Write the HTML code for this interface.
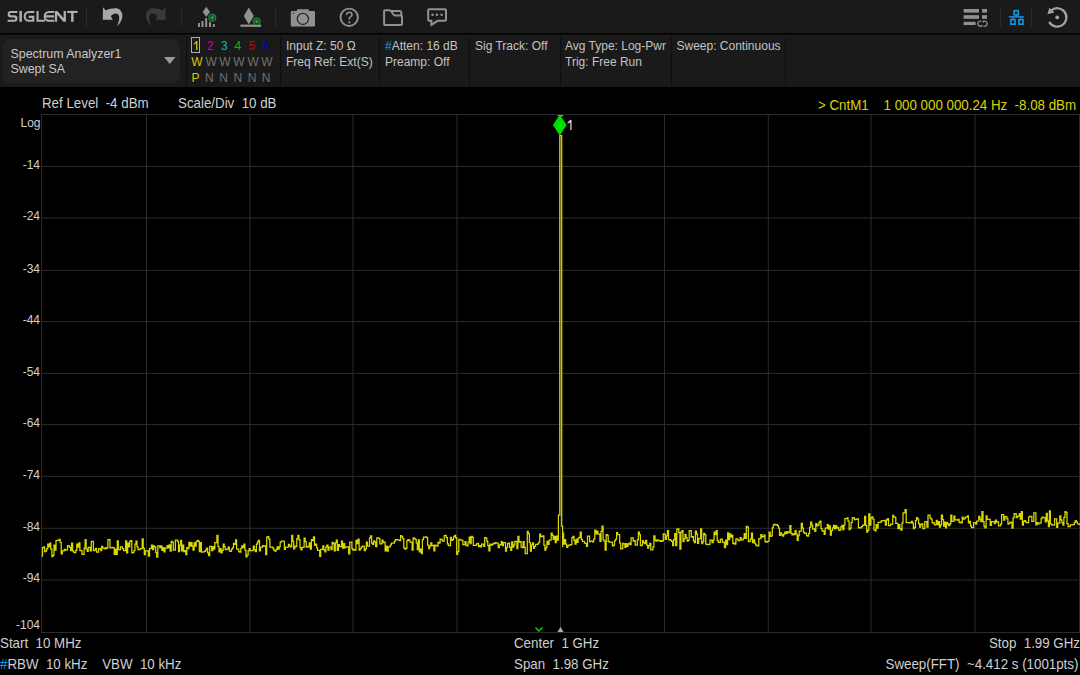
<!DOCTYPE html>
<html><head><meta charset="utf-8">
<style>
html,body{margin:0;padding:0;}
body{width:1080px;height:675px;overflow:hidden;background:#000;position:relative;font-family:"Liberation Sans",sans-serif;}
.abs{position:absolute;white-space:pre;line-height:1;}
#tb{position:absolute;left:0;top:0;width:1080px;height:33px;background:#1a1a1a;}
#tbline{position:absolute;left:0;top:33px;width:1080px;height:1px;background:#000;}
#pn{position:absolute;left:0;top:34px;width:1080px;height:53px;background:#1a1a1a;}
.sep{position:absolute;width:1px;background:#0e0e0e;top:3px;height:48px;}
.tsep{position:absolute;width:1px;background:#2a2a2a;top:7px;height:20px;}
.pt{position:absolute;white-space:pre;line-height:1;font-size:12px;color:#c4c4c4;}
.ct{position:absolute;white-space:pre;line-height:1;font-size:14.2px;color:#cfcfcf;transform:scaleX(0.939);transform-origin:0 0;}
.yl{position:absolute;white-space:pre;line-height:1;font-size:12px;color:#d0d0d0;right:1040px;}
svg{position:absolute;left:0;top:0;}
</style></head><body>
<div id="tb">
  <svg width="1080" height="33" viewBox="0 0 1080 33">
    <g fill="none" stroke="#adb0ad" stroke-width="2.1">
      <path d="M17.4,11.95 H10.9 A2.2,2.2 0 0 0 10.9,16.35 H14.2 A2.22,2.22 0 0 1 14.2,20.8 H7.6"/>
      <path d="M20.65,10.9 V21.85" stroke-width="2.5"/>
      <path d="M34.3,11.95 H28.9 A4.43,4.43 0 0 0 28.9,20.8 H33.25 V16.9 H28.7"/>
      <path d="M37.55,10.9 V20.8 H44.9"/>
      <path d="M54.1,11.95 H48.9 A4.43,4.43 0 0 0 48.9,20.8 H54.1 M45,16.35 H54.1"/>
      <path d="M67.2,11.95 H77.6"/>
      <path d="M72.35,10.9 V21.85" stroke-width="2.5"/>
    </g>
    <path d="M54.8,21.85 V10.9 H57.3 L63.6,18.3 V10.9 H65.9 V21.85 H63.4 L57.1,14.5 V21.85 Z" fill="#adb0ad"/>
    <!-- undo -->
    <path id="undo" d="M103,7.2 L105.8,10.4 C108.5,8.8 113,8 116.4,8.2 C119.5,8.4 122.2,11.5 122.4,15 C122.6,19 120.5,23 117.2,26.2 C118.3,23.5 119.4,20 119.2,17 C119,14.5 117.5,13.4 115.6,13.4 C113.6,13.4 111.8,15 110.8,16.2 L112.8,19.8 L102.8,19.8 Z" fill="#a6aaa7"/>
    <!-- redo -->
    <path d="M103,7.2 L105.8,10.4 C108.5,8.8 113,8 116.4,8.2 C119.5,8.4 122.2,11.5 122.4,15 C122.6,19 120.5,23 117.2,26.2 C118.3,23.5 119.4,20 119.2,17 C119,14.5 117.5,13.4 115.6,13.4 C113.6,13.4 111.8,15 110.8,16.2 L112.8,19.8 L102.8,19.8 Z" fill="#383c38" transform="translate(268.4,0) scale(-1,1)"/>
    <!-- peak icon -->
    <g fill="#8f938f">
      <rect x="198" y="23" width="2" height="4"/><rect x="201.5" y="21" width="2" height="6"/><rect x="205.2" y="18" width="2" height="9"/><rect x="209" y="21.7" width="2" height="5.3"/><rect x="212.8" y="24" width="2" height="3"/>
      <path d="M206.3,6.7 L210,12 L206.3,17 L202.7,12 Z"/>
    </g>
    <circle cx="212.3" cy="17.7" r="4.9" fill="#1a1a1a"/>
    <circle cx="212.3" cy="17.7" r="3.7" fill="#046012" stroke="#4f8a5a" stroke-width="0.7"/>
    <path d="M212.3,15.3 L212.9,17.7 L212.3,20.1 L211.7,17.7 Z" fill="#8fb095"/>
    <rect x="210.1" y="17.4" width="4.4" height="0.6" fill="#4f8a5a"/>
    <!-- marker icon -->
    <g fill="#8f938f">
      <path d="M248.8,7.5 L253.8,16 L248.8,24.6 L243.8,16 Z"/>
      <rect x="240.4" y="24.6" width="20.4" height="2.2"/>
    </g>
    <circle cx="256.7" cy="21.4" r="4.8" fill="#1a1a1a"/>
    <rect x="252" y="24.6" width="8.8" height="2.2" fill="#8f938f"/>
    <circle cx="256.7" cy="21.4" r="3.7" fill="#046012" stroke="#4f8a5a" stroke-width="0.7"/>
    <path d="M254.4,21.4 L256.7,20.85 L259,21.4 L256.7,21.95 Z" fill="#8fb095"/>
    <rect x="256.4" y="19.3" width="0.6" height="4.2" fill="#4f8a5a"/>
    <!-- camera -->
    <g fill="#8f938f">
      <rect x="290.8" y="11.1" width="24.2" height="15.4" rx="1"/>
      <rect x="297" y="9.2" width="11.8" height="2.4" rx="0.5"/>
    </g>
    <circle cx="302.9" cy="18.9" r="5.6" fill="none" stroke="#2a2a2a" stroke-width="1.3"/>
    <circle cx="293.3" cy="13.2" r="0.8" fill="#2a2a2a"/>
    <!-- help -->
    <circle cx="349.2" cy="17.3" r="8.7" fill="none" stroke="#8f938f" stroke-width="1.9"/>
    <path d="M346.6,15 C346.6,13.2 347.8,12.3 349.3,12.3 C350.9,12.3 352,13.3 352,14.8 C352,16.5 349.3,16.8 349.3,18.7 V19.4" fill="none" stroke="#8f938f" stroke-width="1.6"/><circle cx="349.3" cy="22.3" r="1.15" fill="#8f938f"/>
    <!-- folder -->
    <g fill="none" stroke="#8f938f" stroke-width="2">
      <path d="M384.1,11.2 Q384.1,10.2 385.1,10.2 L389.8,10.2 C391.2,10.2 391.7,11.6 392.5,13.1 C393.2,14.6 393.6,15.4 395,15.4 L401,15.4 Q402,15.4 402,16.4 L402,24 Q402,25 401,25 L385.1,25 Q384.1,25 384.1,24 Z"/>
      <path d="M392,11.1 L400,11.1 Q401.3,11.1 401.3,12.6 L401.3,15.4"/>
    </g>
    <!-- chat -->
    <path d="M429.2,9.2 L445,9.2 Q446,9.2 446,10.2 L446,19.8 Q446,20.8 445,20.8 L437.6,20.8 L431.4,24.8 L431.4,20.8 L429.2,20.8 Q428.2,20.8 428.2,19.8 L428.2,10.2 Q428.2,9.2 429.2,9.2 Z" fill="none" stroke="#8f938f" stroke-width="2"/>
    <g fill="#8f938f"><circle cx="432.6" cy="14.8" r="1.3"/><circle cx="437" cy="14.8" r="1.3"/><circle cx="441.6" cy="14.8" r="1.3"/></g>
    <!-- right icons -->
    <g fill="#8f938f">
      <rect x="963.6" y="9" width="15.4" height="3.6"/><rect x="982" y="9" width="5" height="3.6"/>
      <rect x="963.6" y="15.2" width="15.4" height="3.6"/><rect x="982" y="15.2" width="5" height="3.6"/>
      <rect x="963.6" y="21.8" width="12" height="3.2"/>
    </g>
    <path d="M981.45,21.53 A2.5,2.5 0 1 0 981.45,25.87 M983.45,21.53 A2.5,2.5 0 1 1 983.45,25.87" fill="none" stroke="#8f938f" stroke-width="1.25"/><path d="M980.9,24.4 L982.9,25.9 L980.9,27.2 Z M984,20.2 L982,21.5 L984,23 Z" fill="#8f938f"/>
    <g fill="none" stroke="#1a8fd6" stroke-width="1.7">
      <rect x="1014.1" y="10.7" width="4.2" height="4.1"/>
      <rect x="1010.9" y="19.6" width="4.1" height="4.6"/>
      <rect x="1018.9" y="19.6" width="4.1" height="4.6"/>
    </g>
    <g fill="#1a8fd6"><rect x="1008.8" y="16.1" width="15" height="1.5"/><rect x="1015.5" y="14.6" width="1.5" height="2"/><rect x="1012.2" y="17.4" width="1.5" height="1.5"/><rect x="1020.2" y="17.4" width="1.5" height="1.5"/></g>
    <path d="M1051,10.61 A9.2,9.2 0 1 1 1049.17,21.89" fill="none" stroke="#a2a6a3" stroke-width="2.2"/>
    <path d="M1047.4,14.2 L1049.4,7.8 L1054.4,12.6 Z" fill="#a2a6a3"/>
    <circle cx="1057.2" cy="17.4" r="1.9" fill="#a2a6a3"/>
  </svg>
  <div class="tsep" style="left:86px"></div>
  <div class="tsep" style="left:181px"></div>
  <div class="tsep" style="left:275px"></div>
  <div class="tsep" style="left:1000px"></div>
  <div class="tsep" style="left:1031px"></div>
</div>
<div id="tbline"></div>
<div id="pn">
  <div style="position:absolute;left:3px;top:5px;width:177px;height:44px;border-radius:7px;background:#222;"></div>
  <div class="pt" style="left:10.5px;top:14px;font-size:12.4px;color:#c8c8c8">Spectrum Analyzer1</div>
  <div class="pt" style="left:10.5px;top:28.7px;font-size:12.4px;color:#c8c8c8">Swept SA</div>
  <svg style="left:163.5px;top:23px" width="13" height="8"><path d="M0,0 L11.6,0 L5.8,7 Z" fill="#9a9a9a"/></svg>
  <div class="sep" style="left:186px"></div>
  <div style="position:absolute;left:191px;top:3px;width:7px;height:14px;border:1.3px solid #a4afba;"></div>
  <svg style="left:0;top:0" width="280" height="53"><path d="M196.1,7.1 H197.4 V16 H196.1 V9.3 C195.5,9.9 194.6,10.4 193.8,10.7 V9.4 C194.8,9 195.6,8.1 196.1,7.1 Z" fill="#d6c800"/></svg>
  <div class="pt" style="left:207px;top:5.6px;color:#c000c8">2</div>
  <div class="pt" style="left:221px;top:5.6px;color:#00bcc0">3</div>
  <div class="pt" style="left:234.5px;top:5.6px;color:#00c000">4</div>
  <div class="pt" style="left:248.5px;top:5.6px;color:#d00000">5</div>
  <div class="pt" style="left:262.5px;top:5.6px;color:#0000d0">6</div>
  <div class="pt" style="left:191.3px;top:21.6px;color:#d6c800">W</div>
  <div class="pt" style="left:205.5px;top:21.6px;color:#6f7370">W</div>
  <div class="pt" style="left:219.3px;top:21.6px;color:#6f7370">W</div>
  <div class="pt" style="left:233.3px;top:21.6px;color:#6f7370">W</div>
  <div class="pt" style="left:247.5px;top:21.6px;color:#6f7370">W</div>
  <div class="pt" style="left:261.3px;top:21.6px;color:#6f7370">W</div>
  <div class="pt" style="left:191.5px;top:38px;color:#d6c800">P</div>
  <div class="pt" style="left:205px;top:38px;color:#6f7370">N</div>
  <div class="pt" style="left:219.3px;top:38px;color:#6f7370">N</div>
  <div class="pt" style="left:233.5px;top:38px;color:#6f7370">N</div>
  <div class="pt" style="left:247.7px;top:38px;color:#6f7370">N</div>
  <div class="pt" style="left:261.7px;top:38px;color:#6f7370">N</div>
  <div class="sep" style="left:280px"></div>
  <div class="pt" style="left:286px;top:6px">Input Z: 50 Ω</div>
  <div class="pt" style="left:286px;top:21.6px">Freq Ref: Ext(S)</div>
  <div class="sep" style="left:379px"></div>
  <div class="pt" style="left:385px;top:6px"><span style="color:#1a9fe0">#</span>Atten: 16 dB</div>
  <div class="pt" style="left:385px;top:21.6px">Preamp: Off</div>
  <div class="sep" style="left:469px"></div>
  <div class="pt" style="left:475px;top:6px">Sig Track: Off</div>
  <div class="sep" style="left:560px"></div>
  <div class="pt" style="left:565px;top:6px">Avg Type: Log-Pwr</div>
  <div class="pt" style="left:565px;top:21.6px">Trig: Free Run</div>
  <div class="sep" style="left:671px"></div>
  <div class="pt" style="left:676.5px;top:6px">Sweep: Continuous</div>
  <div class="sep" style="left:785px"></div>
</div>
<div style="position:absolute;left:0;top:34px;width:1080px;height:1px;background:#0c0c0c"></div>
<svg width="1080" height="675" viewBox="0 0 1080 675">
  <g stroke="#2a2c2a" stroke-width="1"><line x1="41.50" y1="114.0" x2="41.50" y2="633.0"/><line x1="41.0" y1="114.50" x2="1080.0" y2="114.50"/><line x1="146.50" y1="114.0" x2="146.50" y2="633.0"/><line x1="41.0" y1="166.50" x2="1080.0" y2="166.50"/><line x1="250.00" y1="114.0" x2="250.00" y2="633.0"/><line x1="41.0" y1="218.00" x2="1080.0" y2="218.00"/><line x1="353.00" y1="114.0" x2="353.00" y2="633.0"/><line x1="41.0" y1="270.40" x2="1080.0" y2="270.40"/><line x1="457.00" y1="114.0" x2="457.00" y2="633.0"/><line x1="41.0" y1="321.60" x2="1080.0" y2="321.60"/><line x1="560.50" y1="114.0" x2="560.50" y2="633.0"/><line x1="41.0" y1="373.40" x2="1080.0" y2="373.40"/><line x1="664.50" y1="114.0" x2="664.50" y2="633.0"/><line x1="41.0" y1="424.60" x2="1080.0" y2="424.60"/><line x1="768.30" y1="114.0" x2="768.30" y2="633.0"/><line x1="41.0" y1="476.40" x2="1080.0" y2="476.40"/><line x1="871.00" y1="114.0" x2="871.00" y2="633.0"/><line x1="41.0" y1="528.30" x2="1080.0" y2="528.30"/><line x1="975.00" y1="114.0" x2="975.00" y2="633.0"/><line x1="41.0" y1="579.90" x2="1080.0" y2="579.90"/><line x1="1079.50" y1="114.0" x2="1079.50" y2="633.0"/><line x1="41.0" y1="632.50" x2="1080.0" y2="632.50"/></g>
  <path d="M41.5,556.0H42.5V547.6H43.6V546.8H44.6V551.6H45.7V550.9H46.7V548.7H47.7V544.0H48.8V546.8H49.8V543.2H50.8V549.0H51.9V556.6H52.9V555.3H54.0V545.0H55.0V550.0H56.0V540.5H57.1V540.3H58.1V540.4H59.1V539.4H60.2V542.4H61.2V553.8H62.3V550.8H63.3V550.8H64.3V549.3H65.4V550.0H66.4V550.0H67.5V545.7H68.5V545.9H69.5V547.3H70.6V550.6H71.6V543.0H72.6V550.9H73.7V552.3H74.7V552.7H75.8V550.4H76.8V544.2H77.8V547.1H78.9V542.8H79.9V550.6H80.9V550.6H82.0V554.4H83.0V554.4H84.1V548.1H85.1V539.5H86.1V549.2H87.2V551.4H88.2V547.4H89.2V547.4H90.3V550.9H91.3V541.3H92.4V541.3H93.4V550.6H94.4V550.0H95.5V548.3H96.5V552.2H97.6V552.1H98.6V548.7H99.6V548.7H100.7V550.6H101.7V546.3H102.7V548.2H103.8V548.2H104.8V548.9H105.9V547.7H106.9V548.2H107.9V539.7H109.0V539.6H110.0V547.8H111.0V547.8H112.1V547.4H113.1V547.5H114.2V554.4H115.2V549.2H116.2V554.3H117.3V540.9H118.3V549.7H119.4V549.7H120.4V546.8H121.4V546.8H122.5V548.5H123.5V550.7H124.5V550.7H125.6V540.8H126.6V552.9H127.7V543.2H128.7V546.8H129.7V541.4H130.8V540.7H131.8V552.8H132.8V552.7H133.9V550.6H134.9V544.0H136.0V541.1H137.0V546.9H138.0V549.6H139.1V549.5H140.1V548.7H141.1V548.7H142.2V538.8H143.2V548.1H144.3V554.7H145.3V550.9H146.3V550.9H147.4V550.9H148.4V556.2H149.5V548.5H150.5V548.4H151.5V545.2H152.6V549.6H153.6V545.9H154.6V546.9H155.7V552.3H156.7V557.0H157.8V545.8H158.8V545.9H159.8V547.7H160.9V545.9H161.9V550.3H162.9V547.5H164.0V551.9H165.0V548.2H166.1V548.2H167.1V545.7H168.1V547.8H169.2V544.9H170.2V551.0H171.2V541.4H172.3V542.0H173.3V550.2H174.4V550.2H175.4V540.1H176.4V540.1H177.5V541.4H178.5V551.7H179.6V545.1H180.6V540.4H181.6V550.9H182.7V545.1H183.7V551.7H184.7V550.6H185.8V554.7H186.8V547.7H187.9V548.7H188.9V542.3H189.9V546.1H191.0V542.6H192.0V546.2H193.0V550.2H194.1V542.9H195.1V546.0H196.2V541.6H197.2V540.4H198.2V541.0H199.3V551.6H200.3V542.5H201.4V552.0H202.4V551.9H203.4V551.9H204.5V551.3H205.5V550.2H206.5V548.1H207.6V552.8H208.6V555.7H209.7V546.4H210.7V546.4H211.7V550.7H212.8V546.6H213.8V549.2H214.8V542.5H215.9V542.5H216.9V535.3H218.0V546.5H219.0V551.8H220.0V548.7H221.1V552.8H222.1V550.3H223.2V544.0H224.2V546.9H225.2V549.6H226.3V549.3H227.3V549.1H228.3V547.2H229.4V551.0H230.4V551.3H231.5V549.1H232.5V547.9H233.5V543.4H234.6V544.3H235.6V539.9H236.6V549.2H237.7V549.2H238.7V551.7H239.8V552.1H240.8V548.4H241.8V545.9H242.9V547.6H243.9V544.1H244.9V550.1H246.0V556.9H247.0V555.2H248.1V550.8H249.1V548.7H250.1V550.7H251.2V550.7H252.2V550.7H253.3V546.2H254.3V549.7H255.3V551.7H256.4V544.1H257.4V542.1H258.4V540.4H259.5V550.8H260.5V547.4H261.6V547.0H262.6V545.5H263.6V546.2H264.7V545.9H265.7V554.5H266.7V537.0H267.8V536.5H268.8V539.1H269.9V547.2H270.9V547.2H271.9V547.1H273.0V548.5H274.0V550.6H275.1V551.0H276.1V549.5H277.1V546.8H278.2V549.2H279.2V546.7H280.2V542.0H281.3V541.0H282.3V541.0H283.4V541.1H284.4V549.4H285.4V547.2H286.5V547.1H287.5V547.1H288.5V544.4H289.6V546.2H290.6V546.8H291.7V535.3H292.7V541.4H293.7V548.8H294.8V546.0H295.8V546.5H296.8V538.7H297.9V535.3H298.9V539.7H300.0V547.8H301.0V549.9H302.0V547.3H303.1V547.3H304.1V538.2H305.2V541.7H306.2V547.2H307.2V546.4H308.3V546.8H309.3V542.8H310.3V549.1H311.4V539.7H312.4V540.6H313.5V536.9H314.5V545.3H315.5V544.0H316.6V547.8H317.6V550.4H318.6V550.4H319.7V556.3H320.7V549.4H321.8V549.4H322.8V545.8H323.8V549.8H324.9V551.9H325.9V546.9H326.9V545.2H328.0V550.1H329.0V547.2H330.1V547.2H331.1V549.6H332.1V542.3H333.2V543.5H334.2V550.8H335.3V542.5H336.3V540.2H337.3V550.4H338.4V544.7H339.4V546.5H340.4V546.5H341.5V541.0H342.5V548.0H343.6V543.5H344.6V547.9H345.6V546.8H346.7V546.9H347.7V546.9H348.7V553.8H349.8V542.1H350.8V542.1H351.9V548.7H352.9V550.1H353.9V549.6H355.0V550.0H356.0V540.3H357.1V543.6H358.1V539.0H359.1V550.2H360.2V548.7H361.2V547.0H362.2V546.2H363.3V546.2H364.3V550.7H365.4V548.9H366.4V542.0H367.4V546.2H368.5V546.2H369.5V537.9H370.5V535.8H371.6V543.0H372.6V544.3H373.7V540.8H374.7V542.0H375.7V546.7H376.8V537.8H377.8V537.8H378.9V538.5H379.9V543.9H380.9V543.9H382.0V540.1H383.0V542.5H384.0V542.0H385.1V550.8H386.1V546.2H387.2V551.1H388.2V546.9H389.2V546.9H390.3V545.0H391.3V543.1H392.3V543.0H393.4V543.0H394.4V541.1H395.5V539.7H396.5V539.7H397.5V539.9H398.6V540.1H399.6V540.5H400.6V535.6H401.7V536.6H402.7V538.7H403.8V547.9H404.8V549.1H405.8V548.4H406.9V540.9H407.9V539.7H409.0V540.1H410.0V542.0H411.0V542.0H412.1V550.1H413.1V537.9H414.1V538.7H415.2V539.4H416.2V542.9H417.3V549.7H418.3V539.8H419.3V551.9H420.4V549.0H421.4V553.6H422.4V539.5H423.5V537.2H424.5V537.1H425.6V536.8H426.6V537.5H427.6V545.1H428.7V548.6H429.7V546.0H430.8V542.8H431.8V545.7H432.8V545.3H433.9V550.8H434.9V545.1H435.9V545.6H437.0V546.1H438.0V542.3H439.1V543.2H440.1V539.2H441.1V539.3H442.2V541.1H443.2V541.1H444.2V535.5H445.3V535.4H446.3V537.5H447.4V543.8H448.4V545.7H449.4V545.7H450.5V537.3H451.5V540.3H452.5V539.6H453.6V536.8H454.6V535.4H455.7V537.6H456.7V554.3H457.7V551.7H458.8V539.3H459.8V539.8H460.9V539.8H461.9V540.6H462.9V544.5H464.0V544.5H465.0V541.6H466.0V545.3H467.1V545.8H468.1V542.2H469.2V537.2H470.2V543.5H471.2V536.3H472.3V537.3H473.3V545.4H474.3V545.3H475.4V545.3H476.4V543.9H477.5V543.4H478.5V546.7H479.5V545.6H480.6V546.8H481.6V544.2H482.7V544.2H483.7V546.3H484.7V537.5H485.8V538.1H486.8V541.3H487.8V545.5H488.9V550.8H489.9V544.0H491.0V545.0H492.0V544.7H493.0V543.4H494.1V543.5H495.1V542.6H496.1V543.1H497.2V543.1H498.2V547.7H499.3V545.2H500.3V544.7H501.3V541.6H502.4V545.5H503.4V542.6H504.4V542.6H505.5V551.2H506.5V547.4H507.6V543.7H508.6V543.2H509.6V547.4H510.7V550.3H511.7V541.8H512.8V547.1H513.8V544.8H514.8V541.4H515.9V541.4H516.9V548.6H517.9V536.4H519.0V542.1H520.0V541.5H521.1V547.1H522.1V547.5H523.1V541.6H524.2V547.3H525.2V553.5H526.2V553.5H527.3V531.4H528.3V533.5H529.4V542.5H530.4V551.1H531.4V544.9H532.5V542.8H533.5V548.3H534.5V546.4H535.6V544.4H536.6V544.4H537.7V543.9H538.7V542.1H539.7V534.1H540.8V536.6H541.8V536.6H542.9V535.9H543.9V545.1H544.9V550.2H546.0V547.3H547.0V541.3H548.0V544.3H549.1V540.1H550.1V540.0H551.2V533.0H552.2V535.3H553.2V539.3H554.3V536.4H555.3V542.5H556.3V536.1H557.4V540.0H558.4V515.0H559.8V135.5H561.7V526.0H562.6V547.0H562.6V533.0H563.6V544.1H564.7V539.5H565.7V544.1H566.7V547.3H567.8V545.5H568.8V545.0H569.8V544.9H570.9V544.5H571.9V537.6H573.0V536.4H574.0V540.4H575.0V544.2H576.1V539.3H577.1V542.3H578.1V538.0H579.2V537.3H580.2V532.1H581.3V539.3H582.3V541.3H583.3V541.3H584.4V543.1H585.4V543.4H586.5V546.3H587.5V536.1H588.5V536.1H589.6V541.7H590.6V541.0H591.6V541.0H592.7V541.8H593.7V539.0H594.8V530.2H595.8V533.9H596.8V531.0H597.9V534.2H598.9V534.0H599.9V541.3H601.0V531.3H602.0V526.1H603.1V539.8H604.1V541.1H605.1V550.1H606.2V534.5H607.2V535.3H608.2V541.3H609.3V542.2H610.3V542.1H611.4V542.1H612.4V545.8H613.4V545.1H614.5V540.8H615.5V539.2H616.6V532.7H617.6V534.5H618.6V534.5H619.7V543.1H620.7V548.8H621.7V548.7H622.8V543.3H623.8V543.8H624.9V547.4H625.9V543.6H626.9V546.4H628.0V544.1H629.0V543.0H630.0V544.7H631.1V537.9H632.1V537.9H633.2V541.0H634.2V540.5H635.2V545.2H636.3V545.2H637.3V539.9H638.4V532.1H639.4V534.5H640.4V545.7H641.5V545.4H642.5V540.6H643.5V542.6H644.6V543.7H645.6V540.4H646.7V545.2H647.7V548.2H648.7V545.6H649.8V543.3H650.8V549.8H651.8V549.8H652.9V547.0H653.9V535.8H655.0V540.3H656.0V541.1H657.0V539.9H658.1V540.7H659.1V540.7H660.1V541.4H661.2V540.5H662.2V541.0H663.3V533.8H664.3V534.1H665.3V539.4H666.4V535.9H667.4V530.7H668.5V539.7H669.5V539.7H670.5V540.4H671.6V541.4H672.6V545.5H673.6V539.5H674.7V533.5H675.7V545.7H676.8V529.0H677.8V528.9H678.8V532.7H679.9V549.0H680.9V532.2H681.9V530.6H683.0V541.5H684.0V538.8H685.1V534.4H686.1V537.5H687.1V541.0H688.2V540.3H689.2V530.6H690.2V530.6H691.3V537.1H692.3V536.6H693.4V540.9H694.4V542.6H695.4V531.0H696.5V534.0H697.5V543.4H698.6V538.5H699.6V538.5H700.6V528.9H701.7V543.5H702.7V541.8H703.7V533.3H704.8V534.9H705.8V544.2H706.9V544.5H707.9V544.4H708.9V544.4H710.0V540.0H711.0V540.0H712.0V542.5H713.1V540.2H714.1V532.2H715.2V534.7H716.2V530.5H717.2V540.7H718.3V542.3H719.3V542.3H720.4V539.3H721.4V539.1H722.4V542.1H723.5V542.3H724.5V547.5H725.5V540.0H726.6V544.7H727.6V532.9H728.7V539.6H729.7V533.8H730.7V537.2H731.8V535.2H732.8V543.6H733.8V543.2H734.9V544.1H735.9V538.9H737.0V539.0H738.0V540.6H739.0V540.6H740.1V537.7H741.1V539.8H742.1V539.8H743.2V538.3H744.2V533.5H745.3V538.4H746.3V526.4H747.3V527.2H748.4V541.7H749.4V541.1H750.5V538.8H751.5V533.2H752.5V542.5H753.6V539.8H754.6V543.1H755.6V544.8H756.7V545.9H757.7V545.9H758.8V538.7H759.8V538.7H760.8V534.7H761.9V537.1H762.9V536.6H763.9V535.0H765.0V541.5H766.0V542.1H767.1V541.6H768.1V541.2H769.1V532.1H770.2V536.3H771.2V535.9H772.3V527.9H773.3V524.8H774.3V524.4H775.4V524.8H776.4V524.7H777.4V525.6H778.5V528.2H779.5V535.3H780.6V532.8H781.6V534.8H782.6V536.2H783.7V534.0H784.7V532.0H785.7V533.5H786.8V531.5H787.8V532.9H788.9V532.2H789.9V525.6H790.9V533.3H792.0V534.9H793.0V533.9H794.1V534.7H795.1V530.5H796.1V533.8H797.2V540.3H798.2V535.7H799.2V531.2H800.3V531.0H801.3V523.4H802.4V528.1H803.4V532.2H804.4V533.3H805.5V533.2H806.5V535.5H807.5V536.0H808.6V533.4H809.6V527.4H810.7V522.1H811.7V525.1H812.7V529.0H813.8V528.9H814.8V531.3H815.8V523.7H816.9V525.8H817.9V525.1H819.0V522.4H820.0V521.1H821.0V528.6H822.1V531.0H823.1V530.9H824.2V534.3H825.2V528.2H826.2V528.1H827.3V524.6H828.3V529.2H829.3V525.8H830.4V535.0H831.4V530.7H832.5V527.9H833.5V525.4H834.5V528.9H835.6V525.6H836.6V528.0H837.6V527.3H838.7V530.4H839.7V530.2H840.8V526.8H841.8V525.4H842.8V529.7H843.9V525.2H844.9V518.7H846.0V518.6H847.0V517.8H848.0V521.2H849.1V529.7H850.1V528.1H851.1V522.7H852.2V517.8H853.2V517.6H854.3V519.5H855.3V519.4H856.3V519.0H857.4V518.9H858.4V527.8H859.4V527.7H860.5V527.9H861.5V526.7H862.6V525.3H863.6V525.1H864.6V516.3H865.7V525.4H866.7V532.0H867.7V530.3H868.8V513.8H869.8V525.2H870.9V517.7H871.9V516.8H872.9V519.2H874.0V529.9H875.0V530.8H876.1V524.5H877.1V528.1H878.1V522.4H879.2V522.4H880.2V522.4H881.2V520.9H882.3V520.5H883.3V520.5H884.4V520.4H885.4V525.2H886.4V519.9H887.5V518.5H888.5V525.6H889.5V525.6H890.6V524.0H891.6V524.1H892.7V515.3H893.7V516.9H894.7V517.4H895.8V523.4H896.8V523.3H897.9V528.7H898.9V524.7H899.9V528.5H901.0V530.1H902.0V522.8H903.0V512.8H904.1V512.8H905.1V509.7H906.2V522.6H907.2V522.6H908.2V522.6H909.3V522.9H910.3V522.9H911.3V521.4H912.4V523.2H913.4V528.7H914.5V527.3H915.5V520.7H916.5V517.5H917.6V519.2H918.6V523.7H919.6V527.2H920.7V524.4H921.7V523.8H922.8V528.7H923.8V528.7H924.8V521.6H925.9V521.6H926.9V527.0H928.0V515.1H929.0V515.1H930.0V518.1H931.1V519.2H932.1V522.9H933.1V522.7H934.2V524.8H935.2V524.6H936.3V520.3H937.3V524.5H938.3V521.7H939.4V527.2H940.4V524.9H941.4V515.1H942.5V519.7H943.5V526.0H944.6V522.0H945.6V527.8H946.6V522.6H947.7V523.9H948.7V525.6H949.8V523.9H950.8V515.0H951.8V521.4H952.9V521.4H953.9V516.2H954.9V519.8H956.0V519.8H957.0V520.1H958.1V519.4H959.1V522.5H960.1V522.0H961.2V522.9H962.2V517.2H963.2V519.0H964.3V518.5H965.3V517.0H966.4V517.0H967.4V515.9H968.4V522.8H969.5V521.3H970.5V525.9H971.5V527.6H972.6V527.6H973.6V522.7H974.7V522.7H975.7V524.0H976.7V521.0H977.8V521.0H978.8V516.3H979.9V519.0H980.9V521.5H981.9V511.5H983.0V521.5H984.0V526.0H985.0V527.9H986.1V515.9H987.1V519.3H988.2V519.3H989.2V519.3H990.2V525.4H991.3V521.7H992.3V521.6H993.3V521.8H994.4V523.5H995.4V520.0H996.5V522.2H997.5V521.9H998.5V525.8H999.6V525.8H1000.6V524.2H1001.6V514.7H1002.7V514.7H1003.7V520.0H1004.8V516.5H1005.8V516.5H1006.8V518.9H1007.9V524.0H1008.9V523.4H1010.0V522.0H1011.0V522.3H1012.0V528.0H1013.1V517.9H1014.1V513.7H1015.1V513.7H1016.2V517.6H1017.2V516.3H1018.3V515.8H1019.3V513.7H1020.3V519.2H1021.4V511.7H1022.4V525.1H1023.4V521.3H1024.5V520.5H1025.5V522.2H1026.6V522.6H1027.6V522.6H1028.6V517.2H1029.7V516.3H1030.7V516.3H1031.8V521.4H1032.8V521.4H1033.8V512.8H1034.9V512.8H1035.9V524.9H1036.9V522.6H1038.0V523.8H1039.0V523.2H1040.1V523.2H1041.1V518.7H1042.1V517.2H1043.2V517.6H1044.2V517.6H1045.2V521.9H1046.3V513.4H1047.3V520.9H1048.4V526.5H1049.4V510.9H1050.4V523.8H1051.5V524.9H1052.5V525.0H1053.6V525.1H1054.6V518.9H1055.6V518.9H1056.7V527.4H1057.7V523.0H1058.7V523.0H1059.8V515.8H1060.8V519.9H1061.9V522.5H1062.9V525.0H1063.9V517.3H1065.0V511.5H1066.0V512.6H1067.0V523.6H1068.1V526.6H1069.1V526.6H1070.2V524.8H1071.2V524.8H1072.2V524.9H1073.3V524.5H1074.3V522.5H1075.3V520.6H1076.4V521.8H1077.4V523.8H1078.5V523.8H1079.5V524.5H1080.5" fill="none" stroke="#d8d800" stroke-width="1.25"/>
  <path d="M556.9,114.9 L564.1,114.9 L560.5,117.6 Z" fill="#8c8c8c"/>
  <path d="M559.8,114.7 L566.7,125 L559.8,135.4 L552.9,125 Z" fill="#00dd00"/>
  <path d="M535.5,627.5 L538.8,631 L542.5,627.5" fill="none" stroke="#00dd00" stroke-width="1.4"/>
  <path d="M557.5,632 L560.5,627 L563.5,632 Z" fill="#b0b0b0"/>
</svg>
<svg style="left:0;top:0" width="1080" height="675"><path d="M570.3,119.9 H571.5 V130 H570.3 V122.3 C569.4,122.9 568.5,123.4 567.6,123.7 V122.2 C568.6,121.8 569.6,120.9 570.1,119.9 Z" fill="#e4e6ea"/></svg>
<div class="ct" style="left:41.5px;top:95.75px">Ref Level  -4 dBm</div>
<div class="ct" style="left:178px;top:95.75px">Scale/Div  10 dB</div>
<div class="ct" style="left:818px;top:97.75px;color:#d8d400">&gt; CntM1    1 000 000 000.24 Hz  -8.08 dBm</div>
<div class="abs" style="left:20.5px;top:117px;font-size:12px;color:#d0d0d0">Log</div>
<div class="yl" style="top:158.8px">-14</div><div class="yl" style="top:210.3px">-24</div><div class="yl" style="top:262.7px">-34</div><div class="yl" style="top:313.9px">-44</div><div class="yl" style="top:365.7px">-54</div><div class="yl" style="top:416.9px">-64</div><div class="yl" style="top:468.7px">-74</div><div class="yl" style="top:520.6px">-84</div><div class="yl" style="top:572.2px">-94</div><div class="yl" style="top:619.0px">-104</div>
<div class="ct" style="left:0;top:635.75px">Start  10 MHz</div>
<div class="ct" style="left:0;top:656.75px"><span style="color:#1a9fe0">#</span>RBW  10 kHz    VBW  10 kHz</div>
<div class="ct" style="left:514px;top:635.75px">Center  1 GHz</div>
<div class="ct" style="left:514px;top:656.75px">Span  1.98 GHz</div>
<div class="ct" style="transform-origin:100% 0;right:0.3px;top:635.75px">Stop  1.99 GHz</div>
<div class="ct" style="transform-origin:100% 0;right:1.6px;top:656.75px">Sweep(FFT)  ~4.412 s (1001pts)</div>
</body></html>
